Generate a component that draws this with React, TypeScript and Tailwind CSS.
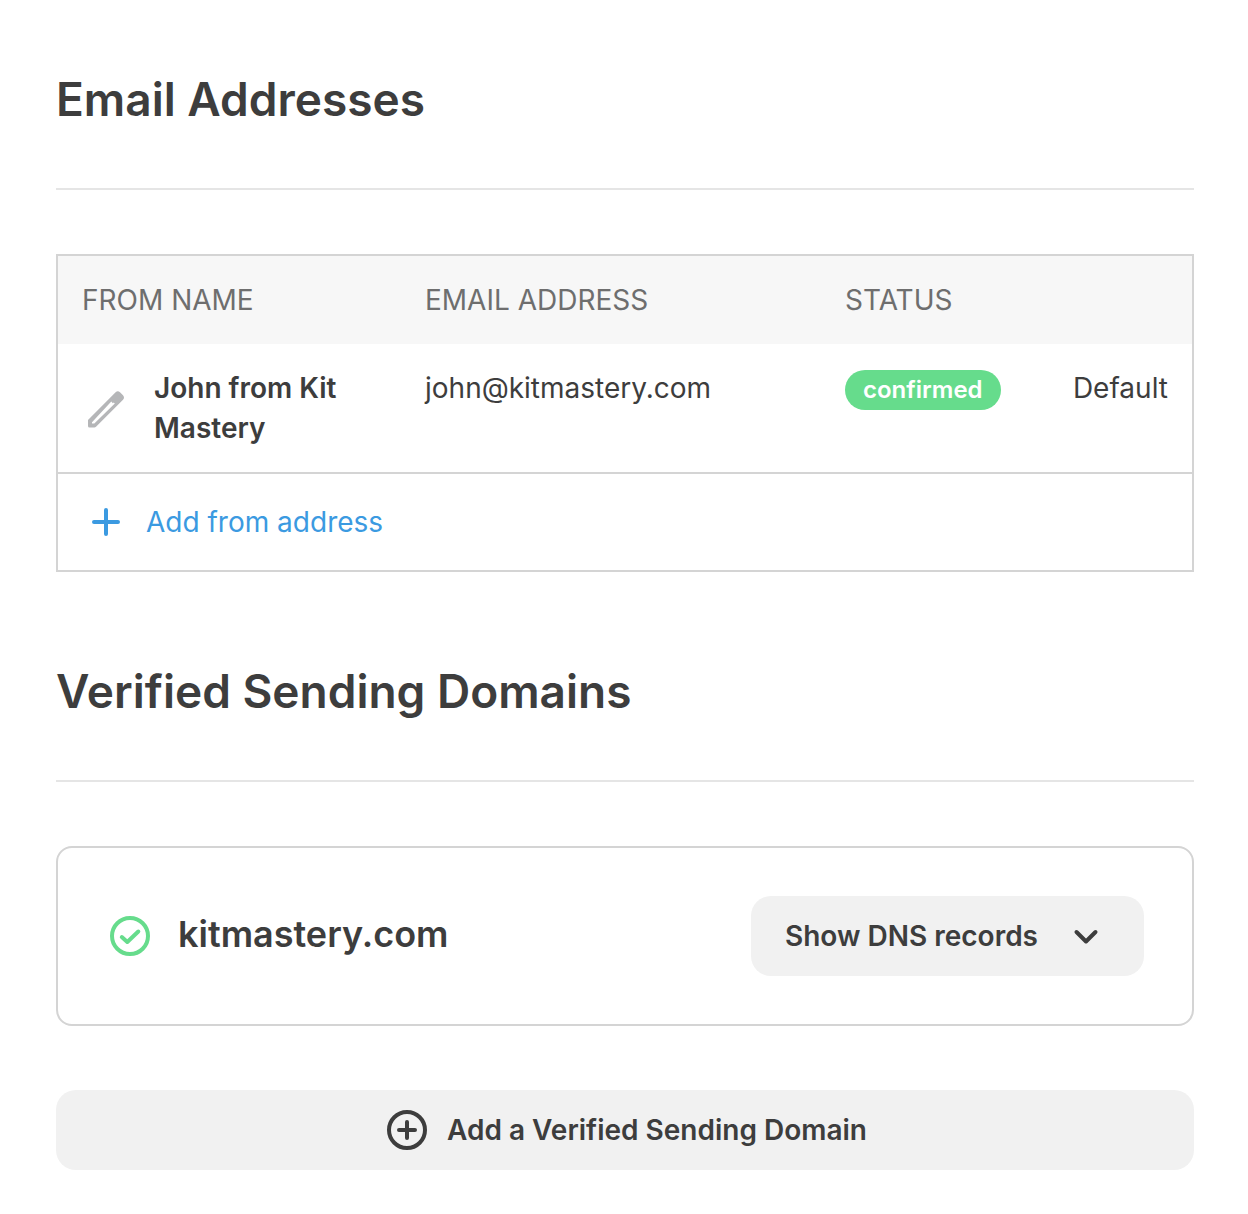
import type { ReactNode } from 'react';

const SectionHeading = ({ children }: { children: ReactNode }) => (
  <h2 className="border-b-2 border-[#e5e5e5] pb-[58px] text-[46px] leading-[62px] font-semibold">
    {children}
  </h2>
);

const App = () => {
  return (
    <main className="min-h-screen bg-white pt-[68px] pr-[54px] pb-11 pl-14 font-['Inter',sans-serif] text-[#3d3d3d]">
      {/* Email addresses */}
      <section>
        <SectionHeading>Email Addresses</SectionHeading>

        <div className="mt-16 border-2 border-[#d4d4d4] text-[28px] leading-10">
          <table className="w-full text-left">
            <thead className="bg-[#f7f7f7] text-[#6e6e6e] uppercase">
              <tr>
                <th className="w-[343px] px-6 py-6 font-normal">From name</th>
                <th className="w-[420px] px-6 py-6 font-normal">Email address</th>
                <th className="px-6 py-6 font-normal">Status</th>
                <th />
              </tr>
            </thead>
            <tbody>
              <tr className="border-b-2 border-[#d4d4d4] align-top">
                <td className="px-6 py-6 font-semibold">
                  <div className="flex items-center gap-6">
                    <button aria-label="Edit from name" className="shrink-0">
                      <svg width="48" height="48" viewBox="0 0 48 48" fill="#b5b6b8">
                        <path
                          fillRule="evenodd"
                          d="M6 36L33.600 8.200q2.200-2 4.400 0l3 3q2 2.300 0 4.600L14 42.800q-.7.7-1.600.7H7.500Q6 43.500 6 42zM10 38.300V39.500h2.300L32.800 19.600l-1-1-1 .6-1.500-1.800z"
                        />
                      </svg>
                    </button>
                    <span>John from Kit Mastery</span>
                  </div>
                </td>
                <td className="px-6 py-6">john@kitmastery.com</td>
                <td className="px-6 py-6">
                  <span className="inline-block rounded-full bg-[#66dc8c] px-[18px] text-2xl leading-10 font-semibold text-white">
                    confirmed
                  </span>
                </td>
                <td className="px-6 py-6 text-right">Default</td>
              </tr>
            </tbody>
          </table>
          <button className="flex h-24 w-full items-center gap-6 px-8 text-[#3b9ae1]">
            <svg width="32" height="32" viewBox="0 0 32 32" fill="none" stroke="currentColor" strokeWidth="4" strokeLinecap="round">
              <path d="M16 4v24M4 16h24" />
            </svg>
            Add from address
          </button>
        </div>
      </section>

      {/* Verified sending domains */}
      <section className="mt-[88px]">
        <SectionHeading>Verified Sending Domains</SectionHeading>

        <div className="mt-16 flex items-center justify-between rounded-2xl border-2 border-[#d4d4d4] p-12">
          <div className="flex items-center gap-6">
            <svg width="48" height="48" viewBox="0 0 48 48" fill="none" stroke="#66dc8c" strokeWidth="4" strokeLinecap="round" strokeLinejoin="round">
              <circle cx="24" cy="24" r="18" />
              <path d="M15.800 25l5.500 5 11-10.500" />
            </svg>
            <h3 className="pb-1 text-4xl leading-[48px] font-semibold">kitmastery.com</h3>
          </div>
          <button className="flex h-20 items-center gap-6 rounded-[20px] bg-[#f1f1f1] px-[34px] text-[28px] font-semibold">
            Show DNS records
            <svg width="48" height="48" viewBox="0 0 48 48" fill="none" stroke="currentColor" strokeWidth="4" strokeLinecap="round" strokeLinejoin="round">
              <path d="M14.500 20l9.500 9.500 9.500-9.500" />
            </svg>
          </button>
        </div>

        <button className="mt-16 flex h-20 w-full items-center justify-center gap-4 rounded-[20px] bg-[#f1f1f1] text-[28px] font-semibold">
          <svg width="48" height="48" viewBox="0 0 48 48" fill="none" stroke="currentColor" strokeWidth="4" strokeLinecap="round">
            <circle cx="24" cy="24" r="18" />
            <path d="M24 16v16M16 24h16" />
          </svg>
          Add a Verified Sending Domain
        </button>
      </section>
    </main>
  );
};

export default App;
